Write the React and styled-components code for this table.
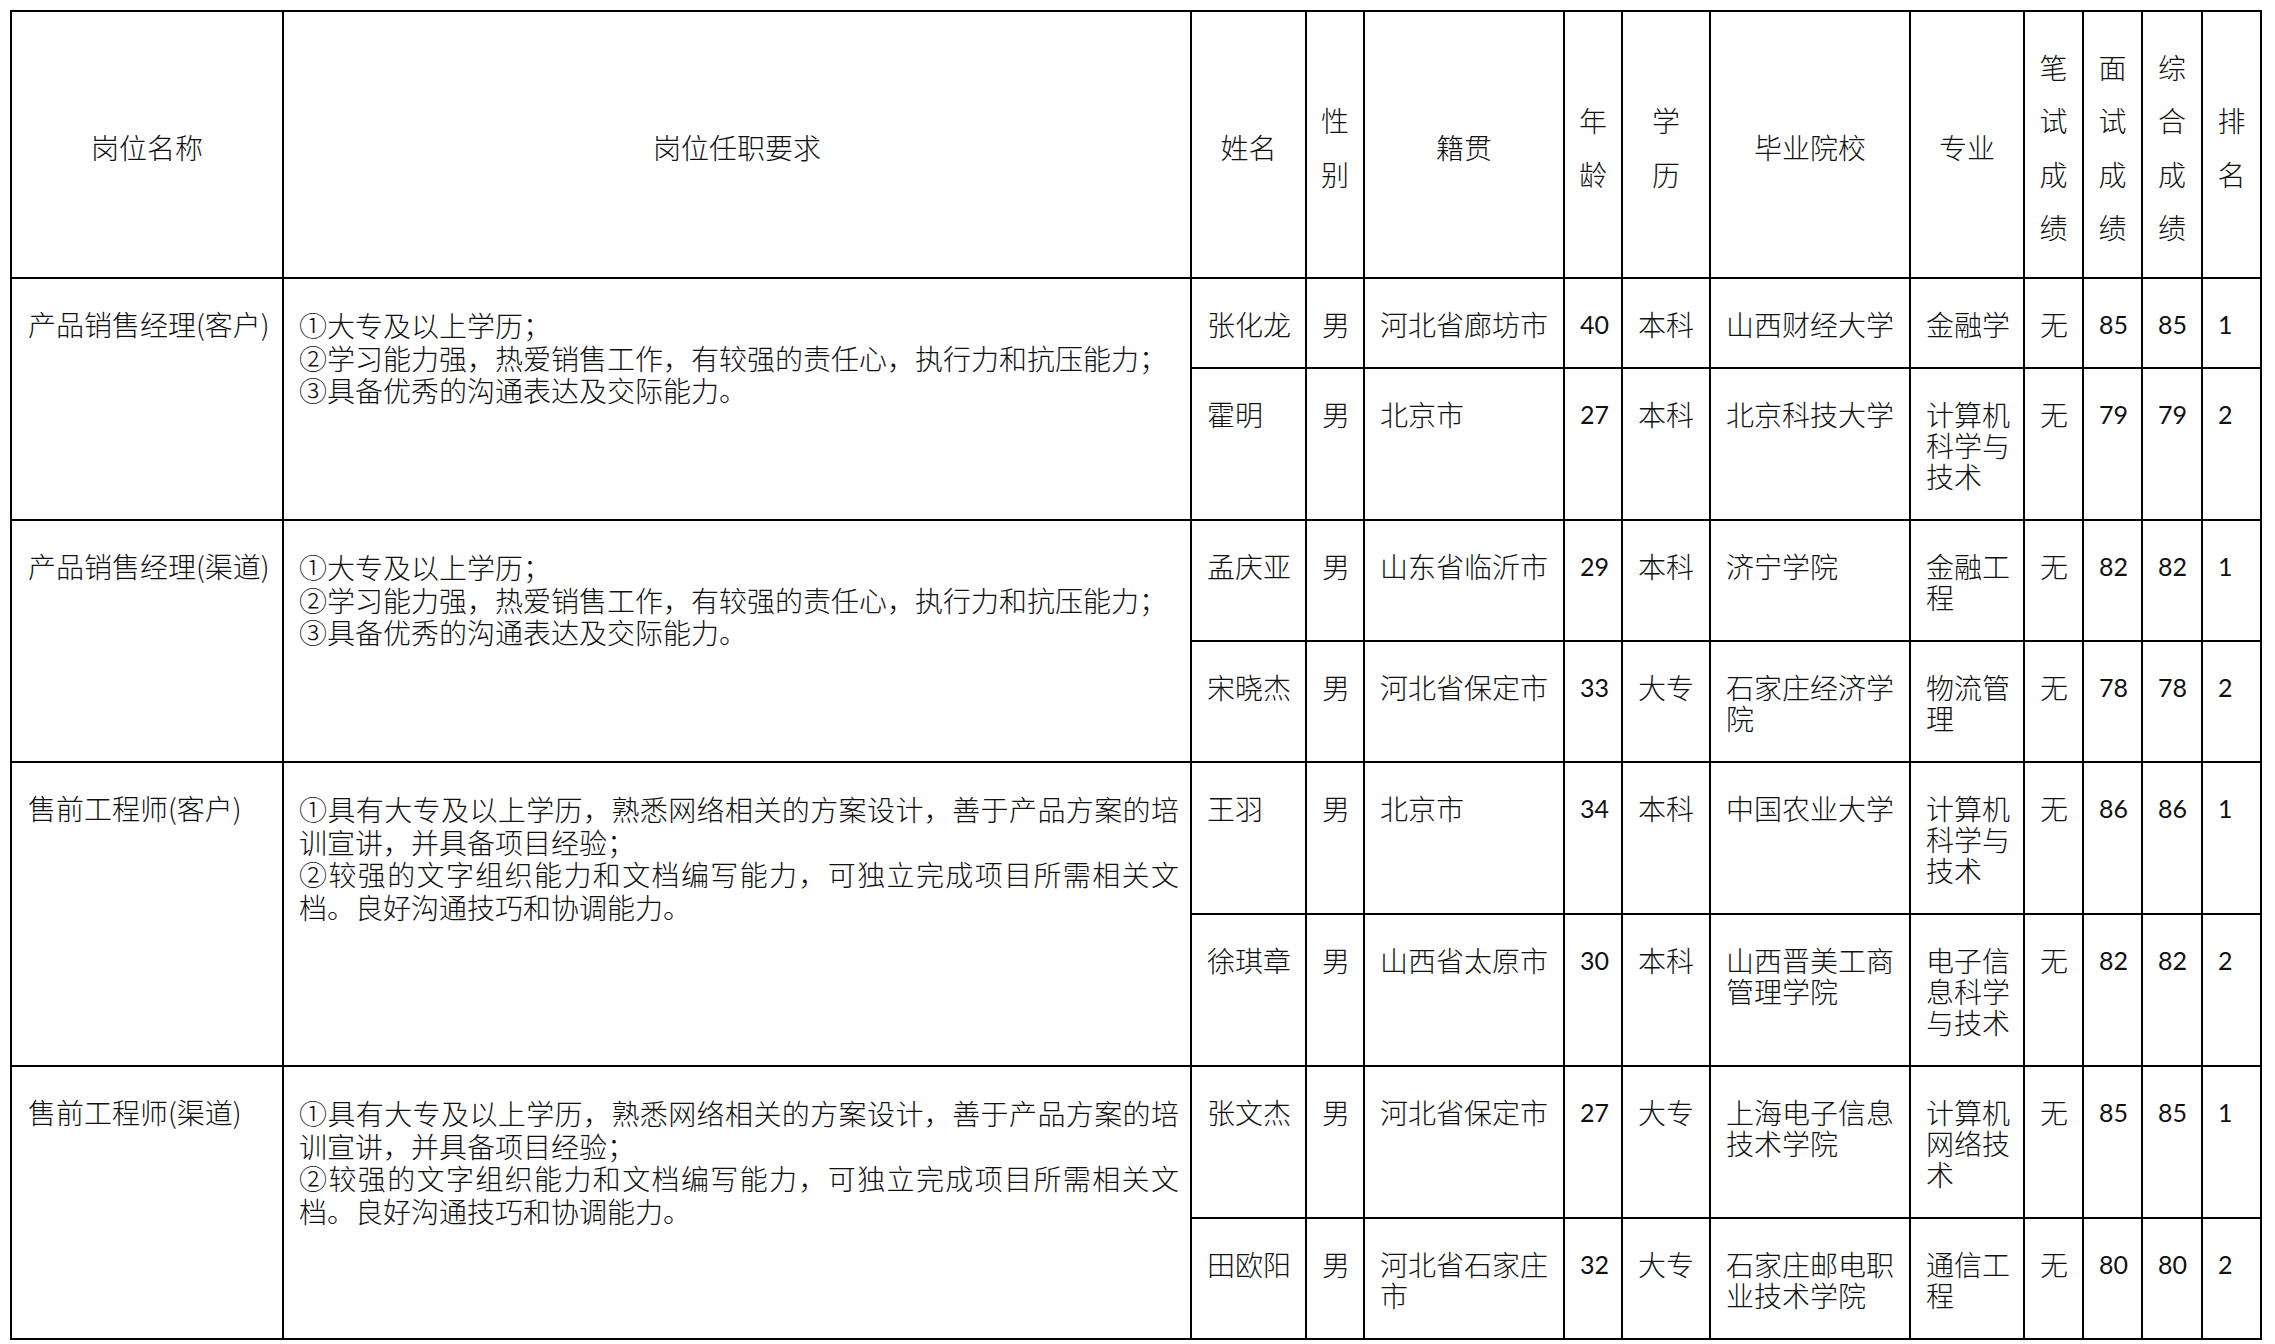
import React from 'react';
import styled, { createGlobalStyle } from 'styled-components';

const GlobalStyle = createGlobalStyle`
    html, body {
        margin: 0;
        padding: 0;
        background: #fff;
    }
    body {
        font-family: "Noto Sans CJK SC", sans-serif;
        color: #000;
    }
`;

const Page = styled.div`
    padding: 10px 0 0 10px;
`;

const Sheet = styled.table`
    border-collapse: collapse;
    table-layout: fixed;
    width: 2252px;
    font-size: 28px;
    font-weight: 300;
    color: #111;
`;

const HeadCell = styled.th`
    height: 259px;
    padding: 6px 0 0 0;
    border: 2px solid #000;
    font-weight: 300;
    text-align: center;
    vertical-align: middle;
`;

const HeadLabel = styled.span`
    display: flex;
    flex-direction: column;
    align-items: center;
    line-height: 53.3px;
    white-space: nowrap;
`;

const Cell = styled.td`
    padding: 30px 11px 27px 15px;
    border: 2px solid #000;
    vertical-align: top;
    text-align: left;
    line-height: 31px;
    font-family: ${(p) => (p.$num ? '"Lato", "Open Sans", sans-serif' : '"Noto Sans CJK SC", sans-serif')};
    font-size: ${(p) => (p.$num ? '25px' : '28px')};
    font-weight: ${(p) => (p.$num ? 400 : 300)};
`;

const TitleCell = styled(Cell)`
    white-space: nowrap;
    padding-left: 16px;
`;

// one paragraph per item, kept in a single text block
const ReqCell = styled(Cell)`
    line-height: 32.5px;
    text-align: justify;
    white-space: pre-line;
`;

const columns = [272, 908, 115, 58, 200, 58, 88, 200, 114, 59, 59, 60, 59];

const headers = [
    ['岗位名称'],
    ['岗位任职要求'],
    ['姓名'],
    ['性', '别'],
    ['籍贯'],
    ['年', '龄'],
    ['学', '历'],
    ['毕业院校'],
    ['专业'],
    ['笔', '试', '成', '绩'],
    ['面', '试', '成', '绩'],
    ['综', '合', '成', '绩'],
    ['排', '名'],
];

const salesReq = [
    '①大专及以上学历；',
    '②学习能力强，热爱销售工作，有较强的责任心，执行力和抗压能力；',
    '③具备优秀的沟通表达及交际能力。',
];

const preSalesReq = [
    '①具有大专及以上学历，熟悉网络相关的方案设计，善于产品方案的培训宣讲，并具备项目经验；',
    '②较强的文字组织能力和文档编写能力，可独立完成项目所需相关文档。良好沟通技巧和协调能力。',
];

const groups = [
    {
        title: '产品销售经理(客户)',
        req: salesReq,
        people: [
            ['张化龙', '男', '河北省廊坊市', '40', '本科', '山西财经大学', '金融学', '无', '85', '85', '1'],
            ['霍明', '男', '北京市', '27', '本科', '北京科技大学', '计算机科学与技术', '无', '79', '79', '2'],
        ],
    },
    {
        title: '产品销售经理(渠道)',
        req: salesReq,
        people: [
            ['孟庆亚', '男', '山东省临沂市', '29', '本科', '济宁学院', '金融工程', '无', '82', '82', '1'],
            ['宋晓杰', '男', '河北省保定市', '33', '大专', '石家庄经济学院', '物流管理', '无', '78', '78', '2'],
        ],
    },
    {
        title: '售前工程师(客户)',
        req: preSalesReq,
        people: [
            ['王羽', '男', '北京市', '34', '本科', '中国农业大学', '计算机科学与技术', '无', '86', '86', '1'],
            ['徐琪章', '男', '山西省太原市', '30', '本科', '山西晋美工商管理学院', '电子信息科学与技术', '无', '82', '82', '2'],
        ],
    },
    {
        title: '售前工程师(渠道)',
        req: preSalesReq,
        people: [
            ['张文杰', '男', '河北省保定市', '27', '大专', '上海电子信息技术学院', '计算机网络技术', '无', '85', '85', '1'],
            ['田欧阳', '男', '河北省石家庄市', '32', '大专', '石家庄邮电职业技术学院', '通信工程', '无', '80', '80', '2'],
        ],
    },
];

// columns holding digits: 年龄, 面试成绩, 综合成绩, 排名
const numCols = [3, 8, 9, 10];

const App = () => {
    return (
        <Page>
            <GlobalStyle />
            <Sheet>
                <colgroup>
                    {columns.map((w, i) => (
                        <col key={i} style={{ width: w }} />
                    ))}
                </colgroup>
                <thead>
                    <tr>
                        {headers.map((lines, i) => (
                            <HeadCell key={i}>
                                <HeadLabel>
                                    {lines.map((t) => (
                                        <span key={t}>{t}</span>
                                    ))}
                                </HeadLabel>
                            </HeadCell>
                        ))}
                    </tr>
                </thead>
                <tbody>
                    {groups.map((g) =>
                        g.people.map((person, idx) => (
                            <tr key={g.title + idx}>
                                {idx === 0 && (
                                    <>
                                        <TitleCell rowSpan={g.people.length}>{g.title}</TitleCell>
                                        <ReqCell rowSpan={g.people.length}>{g.req.join('\n')}</ReqCell>
                                    </>
                                )}
                                {person.map((v, ci) => (
                                    <Cell key={ci} $num={numCols.includes(ci)}>
                                        {v}
                                    </Cell>
                                ))}
                            </tr>
                        ))
                    )}
                </tbody>
            </Sheet>
        </Page>
    );
};

export default App;
